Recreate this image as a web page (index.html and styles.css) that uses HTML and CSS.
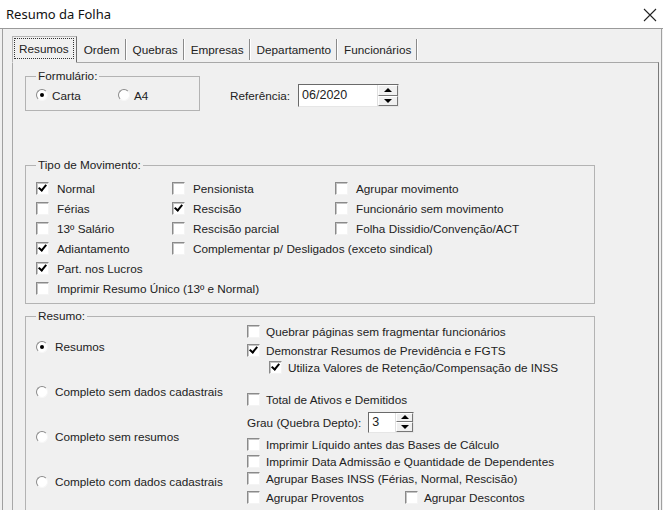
FILE: index.html
```html
<!DOCTYPE html>
<html lang="pt-BR">
<head>
    <meta charset="UTF-8">
    <title>Resumo da Folha</title>
    <link rel="stylesheet" href="styles.css">
</head>
<body>
    <div class="window">
        <!-- Title bar -->
        <div class="titlebar">
            <span class="title">Resumo da Folha</span>
            <svg class="close-icon" width="14" height="14" viewBox="0 0 14 14">
                <path d="M1 1 L13 13 M13 1 L1 13" stroke="#222" stroke-width="1.1" fill="none"/>
            </svg>
        </div>

        <div class="client">
            <!-- Tabs -->
            <div class="tabs">
                <div class="tab active"><span class="focus">Resumos</span></div>
                <div class="tab">Ordem</div>
                <div class="tab">Quebras</div>
                <div class="tab">Empresas</div>
                <div class="tab">Departamento</div>
                <div class="tab">Funcionários</div>
            </div>

            <div class="panel">
                <div class="top-row">
                    <fieldset class="group form-group">
                        <legend>Formulário:</legend>
                        <div class="form-radios">
                            <label class="opt"><span class="radio on"></span>Carta</label>
                            <label class="opt"><span class="radio"></span>A4</label>
                        </div>
                    </fieldset>

                    <div class="ref">
                        <span class="ref-label">Referência:</span>
                        <div class="spin-edit ref-edit">
                            <span class="edit">06/2020</span>
                            <span class="spin">
                                <span class="spin-btn"><span class="arrow-up"></span></span>
                                <span class="spin-btn"><span class="arrow-down"></span></span>
                            </span>
                        </div>
                    </div>
                </div>

                <fieldset class="group mov-group">
                    <legend>Tipo de Movimento:</legend>
                    <div class="mov-grid">
                        <label class="chk"><span class="box on"></span>Normal</label>
                        <label class="chk"><span class="box"></span>Pensionista</label>
                        <label class="chk"><span class="box"></span>Agrupar movimento</label>

                        <label class="chk"><span class="box"></span>Férias</label>
                        <label class="chk"><span class="box on"></span>Rescisão</label>
                        <label class="chk"><span class="box"></span>Funcionário sem movimento</label>

                        <label class="chk"><span class="box"></span>13º Salário</label>
                        <label class="chk"><span class="box"></span>Rescisão parcial</label>
                        <label class="chk"><span class="box"></span>Folha Dissidio/Convenção/ACT</label>

                        <label class="chk"><span class="box on"></span>Adiantamento</label>
                        <label class="chk span-2"><span class="box"></span>Complementar p/ Desligados (exceto sindical)</label>

                        <label class="chk full"><span class="box on"></span>Part. nos Lucros</label>
                        <label class="chk full"><span class="box"></span>Imprimir Resumo Único (13º e Normal)</label>
                    </div>
                </fieldset>

                <fieldset class="group res-group">
                    <legend>Resumo:</legend>
                    <div class="res-cols">
                        <div class="res-radios">
                            <label class="opt wide"><span class="radio on"></span>Resumos</label>
                            <label class="opt wide"><span class="radio"></span>Completo sem dados cadastrais</label>
                            <label class="opt wide"><span class="radio"></span>Completo sem resumos</label>
                            <label class="opt wide"><span class="radio"></span>Completo com dados cadastrais</label>
                        </div>

                        <div class="res-options">
                            <label class="chk row"><span class="box"></span>Quebrar páginas sem fragmentar funcionários</label>
                            <label class="chk row mt-2"><span class="box on"></span>Demonstrar Resumos de Previdência e FGTS</label>
                            <label class="chk row indent"><span class="box on"></span>Utiliza Valores de Retenção/Compensação de INSS</label>
                            <label class="chk row mt-15"><span class="box"></span>Total de Ativos e Demitidos</label>
                            <div class="grau-row">
                                <span>Grau (Quebra Depto):</span>
                                <div class="spin-edit grau-edit">
                                    <span class="edit">3</span>
                                    <span class="spin">
                                        <span class="spin-btn"><span class="arrow-up"></span></span>
                                        <span class="spin-btn"><span class="arrow-down"></span></span>
                                    </span>
                                </div>
                            </div>
                            <label class="chk row mt-3"><span class="box"></span>Imprimir Líquido antes das Bases de Cálculo</label>
                            <label class="chk row"><span class="box"></span>Imprimir Data Admissão e Quantidade de Dependentes</label>
                            <label class="chk row"><span class="box"></span>Agrupar Bases INSS (Férias, Normal, Rescisão)</label>
                            <div class="pair-row">
                                <label class="chk row"><span class="box"></span>Agrupar Proventos</label>
                                <label class="chk row"><span class="box"></span>Agrupar Descontos</label>
                            </div>
                        </div>
                    </div>
                </fieldset>
            </div>
        </div>
    </div>
</body>
</html>
```

FILE: styles.css
```css
body {
    margin: 0;
    background: #f0f0f0;
    font-family: "Liberation Sans", Arial, sans-serif;
    font-size: 11.75px;
    color: #222;
}

.window {
    width: 663px;
    height: 510px;
    overflow: hidden;
    background: #f0f0f0;
}

/* title bar */
.titlebar {
    height: 28px;
    background: #fff;
    border-bottom: 1px solid #9a9a9a;
    display: flex;
    align-items: center;
    justify-content: space-between;
    padding: 0 6px 0 6px;
}

.title {
    font-family: "Noto Sans", sans-serif;
    font-size: 13px;
    color: #111;
}

.close-icon {
    margin-top: 1px;
}

/* client area */
.client {
    margin: 0 1px 0 2px;
    border-left: 1px solid #a0a0a0;
    border-right: 1px solid #a0a0a0;
    padding: 7px 2px 0 9px;
    height: 500px;
}

.tabs {
    display: flex;
    align-items: flex-end;
    height: 26px;
    position: relative;
    z-index: 1;
}

.tab {
    height: 21px;
    line-height: 21px;
    padding: 0 5px 0 7px;
    margin-bottom: 2px;
    border-right: 1px solid #8a8a8a;
    box-shadow: 1px 0 0 #fff;
}

.tab.active {
    margin-bottom: -1px;
    padding: 1px 2px 0 1px;
    border: 1px solid;
    border-color: #b4b4b4 #6e6e6e transparent #b4b4b4;
    background: #f0f0f0;
    box-shadow: none;
    line-height: 16px;
    box-sizing: border-box;
    height: 27px;
}

.focus {
    display: inline-block;
    border: 1px dotted #333;
    padding: 2px 4px;
    line-height: 15px;
}

.panel {
    border: 1px solid #a8a8a8;
    border-right-color: #7a7a7a;
    padding: 6px 12px 0 12px;
    height: 470px;
}

/* group boxes */
.group {
    margin: 0;
    border: 1px solid #b3b3b3;
    padding: 0 10px;
    box-sizing: border-box;
}

.group legend {
    padding: 0 2px;
    line-height: 14px;
}

.top-row {
    display: flex;
    align-items: flex-start;
}

.form-group {
    width: 175px;
    padding-top: 4px;
    padding-bottom: 7px;
}

.form-radios {
    display: grid;
    grid-template-columns: 82px auto;
}

.opt {
    display: flex;
    align-items: center;
    height: 16px;
    gap: 4px;
    white-space: nowrap;
}

.opt.wide {
    gap: 7px;
    height: 17px;
}

.radio {
    width: 12px;
    height: 12px;
    box-sizing: border-box;
    border-radius: 50%;
    border: 1px solid;
    border-color: #8a8a8a #f6f6f6 #f6f6f6 #8a8a8a;
    background: #fff;
    display: flex;
    align-items: center;
    justify-content: center;
    flex: none;
}

.radio.on::after {
    content: "";
    width: 4px;
    height: 4px;
    border-radius: 50%;
    background: #000;
}

.ref {
    margin: 15px 0 0 30px;
    display: flex;
    align-items: center;
    gap: 8px;
}

/* spin edits */
.spin-edit {
    display: flex;
    height: 23px;
    box-sizing: border-box;
    border: 1px solid;
    border-color: #6a6a6a #e6e6e6 #e6e6e6 #6a6a6a;
    background: #fff;
}

.ref-edit .edit {
    width: 75px;
}

.edit {
    padding-left: 3px;
    line-height: 21px;
    font-size: 12.5px;
}

.spin {
    display: flex;
    flex-direction: column;
    width: 20px;
    background: #f0f0f0;
    border-left: 1px solid #e0e0e0;
}

.spin-btn {
    flex: 1;
    display: flex;
    align-items: center;
    justify-content: center;
    border: 1px solid;
    border-color: #fff #777 #777 #fff;
}

.arrow-up,
.arrow-down {
    width: 0;
    height: 0;
    border-left: 4px solid transparent;
    border-right: 4px solid transparent;
}

.arrow-up {
    border-bottom: 4px solid #000;
}

.arrow-down {
    border-top: 4px solid #000;
}

.grau-edit {
    height: 21px;
}

.grau-edit .edit {
    width: 23px;
    line-height: 19px;
}

.grau-edit .spin {
    width: 17px;
}

/* checkboxes */
.chk {
    display: flex;
    align-items: center;
    gap: 8px;
    height: 20px;
    white-space: nowrap;
}

.box {
    width: 13px;
    height: 13px;
    box-sizing: border-box;
    flex: none;
    background: #fff;
    border: 1px solid;
    border-color: #8a8a8a #f4f4f4 #f4f4f4 #8a8a8a;
    box-shadow: inset 1px 1px 0 #c4c4c4;
    position: relative;
}

.box.on::after {
    content: "";
    position: absolute;
    left: 3px;
    top: 0px;
    width: 3px;
    height: 6px;
    border: solid #000;
    border-width: 0 2px 2px 0;
    transform: rotate(40deg);
}

/* tipo de movimento */
.mov-group {
    width: 570px;
    margin-top: 47px;
    padding-top: 6px;
    padding-bottom: 5px;
}

.mov-grid {
    display: grid;
    grid-template-columns: 136px 163px 1fr;
}

.span-2 {
    grid-column: 2 / 4;
}

.full {
    grid-column: 1 / 4;
}

/* resumo */
.res-group {
    width: 570px;
    margin-top: 5px;
    padding-top: 0;
    padding-bottom: 20px;
}

.res-cols {
    display: grid;
    grid-template-columns: 211px 1fr;
}

.res-radios {
    display: flex;
    flex-direction: column;
    padding-top: 15px;
    gap: 28px;
}

.res-options {
    display: flex;
    flex-direction: column;
}

.chk.row {
    height: 17px;
    gap: 6px;
}

.mt-2 {
    margin-top: 2px;
}

.mt-3 {
    margin-top: 3px;
}

.mt-15 {
    margin-top: 15px;
}

.indent {
    margin-left: 22px;
}

.grau-row {
    display: flex;
    align-items: center;
    gap: 7px;
    margin-top: 3px;
    height: 22px;
}

.pair-row {
    display: grid;
    grid-template-columns: 158px auto;
    margin-top: 2px;
}
```
